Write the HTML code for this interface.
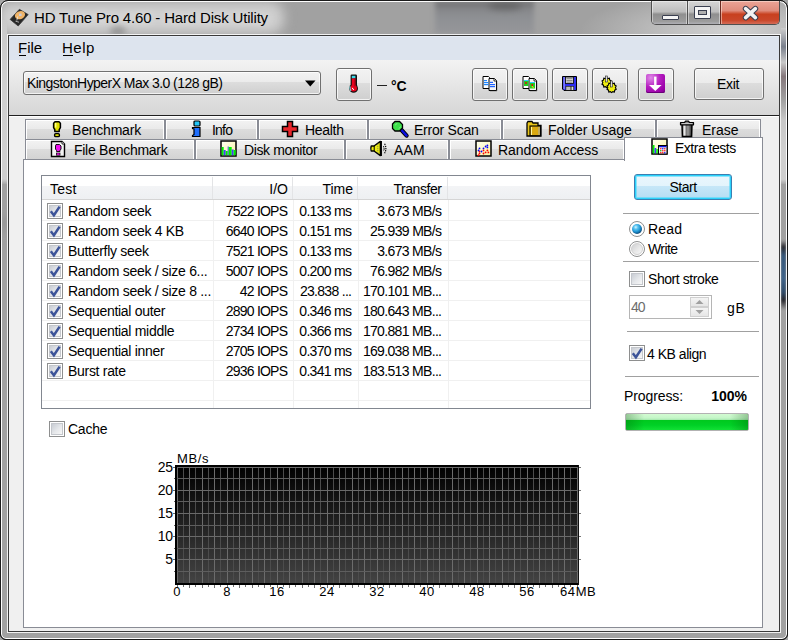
<!DOCTYPE html>
<html><head><meta charset="utf-8"><title>HD Tune Pro</title><style>
*{margin:0;padding:0;box-sizing:border-box}
html,body{width:788px;height:640px;overflow:hidden;background:#a1a1a1;font-family:'Liberation Sans', sans-serif}
.a{position:absolute}
.t{position:absolute;line-height:20px;white-space:nowrap;font-family:'Liberation Sans', sans-serif}
.btn{position:absolute;border:1px solid #707070;border-radius:3px;
 background:linear-gradient(#f2f2f2,#ebebeb 46%,#dddddd 46%,#cfcfcf);
 box-shadow:inset 0 0 0 1px rgba(255,255,255,.75)}
.tab{position:absolute;border:1px solid #898c95;
 background:linear-gradient(#f3f3f3,#eaeaea 46%,#dddddd 46%,#d3d3d3);
 box-shadow:inset 1px 1px 0 #fff, inset -1px 0 0 #fff}
.cb{position:absolute;width:16px;height:16px;border:1px solid #8e8f8f;background:#fff}
.cb::before{content:'';position:absolute;left:1px;top:1px;width:10px;height:10px;border:1px solid #c4c7cc;background:linear-gradient(135deg,#c9cdd4,#e6e8eb 55%,#f7f7f7)}
.sep{position:absolute;height:1px;background:#a0a0a0}
</style></head>
<body>
<div class="a" style="left:0;top:0;width:788px;height:640px;border-radius:8px 8px 6px 6px;border:1px solid #1a1a1a;background:#a1a1a1;box-shadow:inset 0 0 0 1px rgba(255,255,255,.85)"></div>
<div class="a" style="left:520px;top:1px;width:266px;height:34px;background:radial-gradient(ellipse 150px 40px at 210px 30px,rgba(212,212,212,.95),rgba(200,200,200,.6) 55%,rgba(163,163,163,0) 100%)"></div>
<div class="a" style="left:-2px;top:2px;width:286px;height:32px;border-radius:14px;background:rgba(210,210,210,.95);filter:blur(6px)"></div>
<div class="a" style="left:110px;top:26px;width:16px;height:10px;border-radius:50%;background:rgba(120,120,120,.6);filter:blur(3px)"></div>
<div class="a" style="left:435px;top:1px;width:99px;height:33px;background:linear-gradient(#6c6c6e,#86878a 25%,#8e9094 50%,#96979a);filter:blur(2.5px)"></div>
<div class="a" style="left:488px;top:2px;width:34px;height:8px;border-radius:50%;background:#555;filter:blur(3px);opacity:.6"></div>
<div class="a" style="left:2px;top:20px;width:5px;height:164px;background:linear-gradient(#cacaca,#d0d0d0 40%,#cfcfcf 97%,#a8a8a8)"></div>
<div class="a" style="left:2px;top:210px;width:5px;height:30px;background:linear-gradient(#a3a3a3,#959595 40%,#a3a3a3);filter:blur(2px)"></div>
<div class="a" style="left:781px;top:28px;width:5px;height:156px;background:linear-gradient(#cdcdcd,#7a808c 12%,#c8c8c8 22%,#85787c 31%,#a0a0a0 46%,#c8c8c8 59%,#d0d0d0 80%,#cfcfcf 97%,#a8a8a8);filter:blur(.6px)"></div>
<div class="a" style="left:781px;top:240px;width:5px;height:70px;background:linear-gradient(#a3a3a3,#2a2a30 10%,#35577a 22%,#3d6289 55%,#2e4a68 75%,#25252a 86%,#a3a3a3);filter:blur(.8px)"></div>
<div class="a" style="left:0;top:0;width:788px;height:640px;border-radius:8px 8px 6px 6px;border:1px solid #1a1a1a;box-shadow:inset 0 0 0 1px rgba(255,255,255,.85)"></div>
<svg class="a" style="left:6px;top:4px" width="24" height="26" viewBox="0 0 24 26">
<path d="M4.1 15.4 L13.4 5.3 L22.2 10.6 L12.2 22 Z" fill="#262626" stroke="#3a3a3a" stroke-width=".8" stroke-linejoin="round"/>
<ellipse cx="14" cy="11.2" rx="5.2" ry="4" transform="rotate(-20 14 11.2)" fill="#f0b468"/>
<rect x="13" y="9.6" width="2.6" height="2.4" fill="#c8ccd8"/>
<path d="M11.8 12.5 L10.8 16.5" stroke="#e8e8e8" stroke-width=".8"/>
<path d="M9.5 17.2 L13 18.2" stroke="#aaa" stroke-width="1"/>
</svg>
<div class="t" style="left:34px;top:8px;font-size:15px;color:#000;text-shadow:0 0 8px rgba(255,255,255,.7);letter-spacing:-0.17px;">HD Tune Pro 4.60 - Hard Disk Utility</div>
<div class="a" style="left:651px;top:1px;width:129px;height:24px;border:1px solid #505050;border-top:none;border-radius:0 0 5px 5px;overflow:hidden"><div class="a" style="left:0;top:0;width:35px;height:24px;background:linear-gradient(#d6d6d6,#bdbdbd 45%,#8f8f8f 55%,#9c9c9c 85%,#b8b8c0);box-shadow:inset 0 0 0 1px rgba(255,255,255,.45)"></div><div class="a" style="left:35px;top:0;width:1px;height:24px;background:#505050"></div><div class="a" style="left:36px;top:0;width:32px;height:24px;background:linear-gradient(#d6d6d6,#bdbdbd 45%,#8f8f8f 55%,#9c9c9c 85%,#b8b8c0);box-shadow:inset 0 0 0 1px rgba(255,255,255,.45)"></div><div class="a" style="left:68px;top:0;width:1px;height:24px;background:#6a2a20"></div><div class="a" style="left:69px;top:0;width:59px;height:24px;background:linear-gradient(#eaa497,#df8c7c 40%,#c8401f 55%,#c9472a 80%,#d87563);box-shadow:inset 0 0 0 1px rgba(255,240,230,.5)"></div></div>
<div class="a" style="left:662px;top:15px;width:17px;height:5px;border:1px solid #3a3f50;background:#f4f4f4;border-radius:1px"></div>
<div class="a" style="left:694px;top:6px;width:17px;height:13px;border:1px solid #3a3f50;background:#f4f4f4;border-radius:1px"></div>
<div class="a" style="left:698px;top:10px;width:9px;height:5px;border:1px solid #3a3f50;background:#b0b0b0"></div>
<svg class="a" style="left:741px;top:5px" width="19" height="16" viewBox="0 0 19 16">
<path d="M4.6 3.6 L14.4 12.6 M14.4 3.6 L4.6 12.6" stroke="#3a3f50" stroke-width="5.6" stroke-linecap="round"/>
<path d="M4.6 3.6 L14.4 12.6 M14.4 3.6 L4.6 12.6" stroke="#f2f2f2" stroke-width="3.6" stroke-linecap="round"/>
</svg>
<div class="a" style="left:7px;top:34px;width:774px;height:599px;border:1px solid rgba(255,255,255,.85)"></div>
<div class="a" style="left:8px;top:35px;width:772px;height:597px;border:1px solid #3a3a3a;background:#f0f0f0"></div>
<div class="a" style="left:9px;top:36px;width:770px;height:24px;background:#dde4ee;border-top:1px solid #e6ecf6"></div>
<div class="t" style="left:18px;top:38px;font-size:15px;color:#000;">File</div>
<div class="a" style="left:19px;top:55px;width:7px;height:1px;background:#000"></div>
<div class="t" style="left:62px;top:38px;font-size:15px;color:#000;letter-spacing:0.5px;">Help</div>
<div class="a" style="left:63px;top:55px;width:10px;height:1px;background:#000"></div>
<div class="a" style="left:9px;top:60px;width:770px;height:55px;background:linear-gradient(#f3f3f3,#d6d6d6)"></div>
<div class="a" style="left:9px;top:115px;width:770px;height:1px;background:#202020"></div>
<div class="a" style="left:9px;top:116px;width:770px;height:1px;background:#fff"></div>
<div class="btn" style="left:23px;top:71px;width:298px;height:24px"></div>
<div class="t" style="left:27px;top:73px;font-size:14px;color:#000;letter-spacing:-0.55px;">KingstonHyperX Max 3.0 (128 gB)</div>
<svg class="a" style="left:305px;top:80px" width="11" height="7"><path d="M0 0.5 H10.5 L5.25 6.5 Z" fill="#000"/></svg>
<div class="btn" style="left:336px;top:68px;width:36px;height:33px"></div>
<svg class="a" style="left:344px;top:72px" width="20" height="24" viewBox="0 0 20 24">
<rect x="6.6" y="2.6" width="6.4" height="13" rx="1.2" fill="#111"/>
<circle cx="9.6" cy="16.4" r="4.4" fill="#111"/>
<circle cx="9.6" cy="16.2" r="3.3" fill="#e5001a"/>
<rect x="7.8" y="3.8" width="3.6" height="2.6" fill="#3ad8e8"/>
<rect x="7.8" y="6.4" width="3.6" height="9" fill="#e8001c"/>
<rect x="10.4" y="6.4" width="1" height="8" fill="#a00010"/>
<path d="M6 14.5 Q5.6 17 7 18.8" stroke="#7fe8f0" stroke-width="1.1" fill="none"/>
<path d="M8.3 15.8 Q8.4 17.4 10 17.6" stroke="#fff" stroke-width="1" fill="none"/>
</svg>
<div class="a" style="left:377px;top:85px;width:10px;height:1px;background:#222"></div>
<div class="t" style="left:391px;top:76px;font-size:14px;color:#000;font-weight:bold;">°C</div>
<div class="btn" style="left:472px;top:68px;width:36px;height:33px"></div>
<div class="btn" style="left:512px;top:68px;width:36px;height:33px"></div>
<div class="btn" style="left:552px;top:68px;width:36px;height:33px"></div>
<div class="btn" style="left:592px;top:68px;width:36px;height:33px"></div>
<div class="btn" style="left:638px;top:68px;width:36px;height:33px"></div>
<svg class="a" style="left:482px;top:76px" width="18" height="18" viewBox="0 0 18 18">
<path d="M1 0.5 H6.5 L7.5 1.5 V12.5 H1 Z" fill="#fff" stroke="#000" stroke-width="1"/>
<path d="M7 2.5 H12.5 L14.5 4.5 V14.5 H7 Z" fill="#f4f4f4" stroke="#000" stroke-width="1"/>
<path d="M12 2.5 V5 H14.5" fill="#fff" stroke="#000" stroke-width=".8"/>
<path d="M14.9 5 V15 H8" stroke="#333" stroke-width=".8" fill="none" opacity=".5"/>
<rect x="2" y="4" width="3" height="1.2" fill="#1e86ff"/><rect x="2" y="6" width="4.5" height="1.2" fill="#1e86ff"/><rect x="2" y="8" width="4.5" height="1.2" fill="#1e86ff"/><rect x="8" y="5.8" width="3" height="1.2" fill="#1e62ff"/><rect x="8" y="8" width="5" height="1.2" fill="#1e62ff"/><rect x="8" y="10" width="5" height="1.2" fill="#1e62ff"/>
</svg>
<svg class="a" style="left:522px;top:76px" width="18" height="18" viewBox="0 0 18 18">
<path d="M1 0.5 H6.5 L7.5 1.5 V12.5 H1 Z" fill="#fff" stroke="#000" stroke-width="1"/>
<path d="M7 2.5 H12.5 L14.5 4.5 V14.5 H7 Z" fill="#f4f4f4" stroke="#000" stroke-width="1"/>
<path d="M12 2.5 V5 H14.5" fill="#fff" stroke="#000" stroke-width=".8"/>
<path d="M14.9 5 V15 H8" stroke="#333" stroke-width=".8" fill="none" opacity=".5"/>
<rect x="2" y="4" width="4.5" height="6" fill="#22cc22"/><rect x="2" y="4" width="4.5" height="1" fill="#2ad0ff"/><circle cx="4" cy="7" r=".9" fill="#e00"/><rect x="8" y="6" width="5" height="6.5" fill="#22cc22"/><rect x="8" y="6" width="5" height="1" fill="#2ad0ff"/><circle cx="10.2" cy="9" r=".9" fill="#e00"/><path d="M10 10 l1.5 2" stroke="#ee0" stroke-width="1"/>
</svg>
<svg class="a" style="left:562px;top:76px" width="16" height="16" viewBox="0 0 16 16">
<path d="M0.5 0.5 H14.5 V14.5 H2 L0.5 13 Z" fill="#2f2fef" stroke="#000" stroke-width="1"/>
<rect x="1.5" y="1" width="1.3" height="12" fill="#8a8af8"/>
<rect x="3.5" y="1" width="8" height="6.5" fill="#d8d8d8" stroke="#000" stroke-width=".8"/>
<rect x="4.5" y="2.3" width="6" height=".8" fill="#777"/><rect x="4.5" y="4" width="6" height=".8" fill="#777"/><rect x="4.5" y="5.7" width="6" height=".8" fill="#777"/>
<rect x="3.5" y="10" width="8.5" height="4.5" fill="#222"/>
<rect x="4.2" y="10.7" width="4.3" height="3.3" fill="#bbb"/><rect x="9.5" y="10.7" width="1.8" height="3.3" fill="#ddd"/>
</svg>
<svg class="a" style="left:600px;top:75px" width="18" height="19" viewBox="0 0 18 19">
<g stroke="#000" stroke-width="1.1" fill="#f0ef10">
<path d="M2 6 l1.5 -1 l0.3 -1.8 l1.6 0.4 l1.2 -1 l1.2 1 l1.6 -0.4 l0.3 1.8 l1.5 1 l-0.8 1.6 l0.8 1.6 l-1.5 1 l-0.3 1.8 l-1.6 -0.4 l-1.2 1 l-1.2 -1 l-1.6 0.4 l-0.3 -1.8 l-1.5 -1 l0.8 -1.6 Z"/>
<path d="M7 11 l1.5 -1 l0.3 -1.8 l1.6 0.4 l1.2 -1 l1.2 1 l1.6 -0.4 l0.3 1.8 l1.5 1 l-0.8 1.6 l0.8 1.6 l-1.5 1 l-0.3 1.8 l-1.6 -0.4 l-1.2 1 l-1.2 -1 l-1.6 0.4 l-0.3 -1.8 l-1.5 -1 l0.8 -1.6 Z"/>
</g>
<rect x="5.6" y="1" width="1.8" height="6" fill="#ddd" stroke="#222" stroke-width=".6"/>
<rect x="10.6" y="6" width="1.8" height="6" fill="#ddd" stroke="#222" stroke-width=".6"/>
</svg>
<div class="a" style="left:646px;top:74px;width:19px;height:19px;border-radius:2px;background:radial-gradient(circle at 25% 20%,#e08ae8,#b51ec0 45%,#9a00a8 80%,#7a0088);box-shadow:inset 0 -1px 0 #6a0078"></div>
<svg class="a" style="left:646px;top:74px" width="20" height="19" viewBox="0 0 20 19">
<rect x="8.1" y="2.6" width="2.4" height="9" fill="#fff"/>
<path d="M3 11 H15.6 L9.3 17 Z" fill="#fff"/>
</svg>
<div class="btn" style="left:694px;top:68px;width:70px;height:32px"></div>
<div class="t" style="left:717px;top:74px;font-size:14px;color:#000;letter-spacing:-0.33px;">Exit</div>
<div class="tab" style="left:25px;top:119px;width:140px;height:21px"></div>
<div class="tab" style="left:165px;top:119px;width:93px;height:21px"></div>
<div class="tab" style="left:258px;top:119px;width:110px;height:21px"></div>
<div class="tab" style="left:368px;top:119px;width:134px;height:21px"></div>
<div class="tab" style="left:502px;top:119px;width:154px;height:21px"></div>
<div class="tab" style="left:656px;top:119px;width:105px;height:21px"></div>
<div class="tab" style="left:25px;top:139px;width:170px;height:21px"></div>
<div class="tab" style="left:195px;top:139px;width:150px;height:21px"></div>
<div class="tab" style="left:345px;top:139px;width:104px;height:21px"></div>
<div class="tab" style="left:449px;top:139px;width:176px;height:21px"></div>
<div class="a" style="left:23px;top:159px;width:740px;height:469px;border:1px solid #898c95;background:#fff"></div>
<div class="a" style="left:624px;top:137px;width:139px;height:24px;border:1px solid #898c95;border-bottom:none;background:#fff"></div>
<div class="t" style="left:72px;top:120px;font-size:14px;color:#000;letter-spacing:-0.21px;">Benchmark</div>
<div class="t" style="left:212px;top:120px;font-size:14px;color:#000;letter-spacing:-0.8px;">Info</div>
<div class="t" style="left:305px;top:120px;font-size:14px;color:#000;letter-spacing:-0.3px;">Health</div>
<div class="t" style="left:414px;top:120px;font-size:14px;color:#000;letter-spacing:-0.24px;">Error Scan</div>
<div class="t" style="left:548px;top:120px;font-size:14px;color:#000;letter-spacing:-0.03px;">Folder Usage</div>
<div class="t" style="left:702px;top:120px;font-size:14px;color:#000;">Erase</div>
<div class="t" style="left:74px;top:140px;font-size:14px;color:#000;letter-spacing:-0.27px;">File Benchmark</div>
<div class="t" style="left:244px;top:140px;font-size:14px;color:#000;letter-spacing:-0.38px;">Disk monitor</div>
<div class="t" style="left:394px;top:140px;font-size:14px;color:#000;letter-spacing:0.1px;">AAM</div>
<div class="t" style="left:498px;top:140px;font-size:14px;color:#000;letter-spacing:-0.08px;">Random Access</div>
<div class="t" style="left:675px;top:138px;font-size:14px;color:#000;letter-spacing:-0.5px;">Extra tests</div>
<svg class="a" style="left:52px;top:120px" width="10" height="18" viewBox="0 0 10 18">
<path d="M3 1.8 H7 L8.4 3.2 V7.6 L7.2 9.6 V11.6 H2.8 V9.6 L1.6 7.6 V3.2 Z" fill="#e0e000" stroke="#000" stroke-width="1.5" stroke-linejoin="round"/>
<rect x="2.6" y="13.6" width="4.8" height="3" rx="1.2" fill="#d8d800" stroke="#000" stroke-width="1.4"/>
<rect x="3" y="3" width="1.4" height="4.5" fill="#ffff90"/>
</svg>
<svg class="a" style="left:50px;top:140px" width="17" height="18" viewBox="0 0 17 18">
<path d="M1.5 1.5 H12 L14.5 4 V16.5 H1.5 Z" fill="#f4f4f4" stroke="#000" stroke-width="1.4"/>
<path d="M12 1.5 V4 H14.5" fill="#fff" stroke="#000" stroke-width=".8"/>
<path d="M6 4.5 H9.5 L11 6 V9 L10 10.5 V11.5 H6.5 V10.5 L5.5 9 V6 Z" fill="#ee10ee" stroke="#000" stroke-width=".9"/>
<rect x="6.5" y="13" width="3.5" height="2.2" fill="#ee10ee" stroke="#000" stroke-width=".7"/>
</svg>
<svg class="a" style="left:191px;top:120px" width="11" height="18" viewBox="0 0 11 18">
<rect x="3" y="1" width="6" height="5" rx="1" fill="#22c4f4" stroke="#000" stroke-width="1.2"/>
<path d="M1.5 7.5 H9 V16.5 H1.5 V15.5 L3 14.5 V9 L1.5 8.5 Z" fill="#1f6fff" stroke="#000" stroke-width="1.2"/>
</svg>
<svg class="a" style="left:281px;top:120px" width="18" height="18" viewBox="0 0 18 18">
<path d="M6.5 1.5 H11.5 V6.5 H16.5 V11.5 H11.5 V16.5 H6.5 V11.5 H1.5 V6.5 H6.5 Z" fill="#e8262b" stroke="#000" stroke-width="1.5"/>
</svg>
<svg class="a" style="left:391px;top:120px" width="19" height="19" viewBox="0 0 19 19">
<path d="M10.5 10 L15.6 15.6" stroke="#000" stroke-width="4.2" stroke-linecap="round"/>
<path d="M10.5 10 L15.6 15.6" stroke="#0a10e0" stroke-width="2.4" stroke-linecap="round"/>
<path d="M4 1.5 H8.5 L11.5 4.5 V8 L8.5 11 H4 L1.5 8.5 V4 Z" fill="#3de04a" stroke="#000" stroke-width="1.3"/>
<path d="M4.5 4.8 L6.5 3.2 M7.8 8.5 L10 6.5" stroke="#e8ffe8" stroke-width=".7" stroke-dasharray=".8 .6"/>
</svg>
<svg class="a" style="left:525px;top:120px" width="17" height="18" viewBox="0 0 17 18">
<path d="M2 3 L3 1.5 H7 L8 3 H13 V5.5 H16 V16 H2 Z" fill="#e8c418" stroke="#000" stroke-width="1.3"/>
<rect x="5" y="6" width="10.5" height="9.7" fill="#d9a810" stroke="#000" stroke-width="1.1"/>
<rect x="6" y="7" width="1" height="8" fill="#fff6a0"/>
<rect x="13.5" y="7" width="1" height="8" fill="#aaa"/>
</svg>
<svg class="a" style="left:679px;top:120px" width="16" height="18" viewBox="0 0 16 18">
<defs><linearGradient id="tg" x1="0" x2="1"><stop offset="0" stop-color="#5a5a5a"/><stop offset=".25" stop-color="#e8e8e8"/><stop offset=".45" stop-color="#7a7a7a"/><stop offset=".6" stop-color="#9a9a9a"/><stop offset="1" stop-color="#2a2a2a"/></linearGradient></defs>
<path d="M3 4 L3.4 16.6 H12.6 L13 4 Z" fill="url(#tg)" stroke="#000" stroke-width="1.5"/>
<path d="M1.5 2.6 H5.5 L6.5 1.2 H9.5 L10.5 2.6 H14.5 V4.8 H1.5 Z" fill="#8a8a8a" stroke="#000" stroke-width="1.2" stroke-linejoin="round"/>
<rect x="2.5" y="3.2" width="11" height="0.9" fill="#d8d8d8"/>
</svg>
<svg class="a" style="left:220px;top:140px" width="17" height="17" viewBox="0 0 17 17">
<defs><linearGradient id="g220" x1="0" y1="0" x2="1" y2="1"><stop offset="0" stop-color="#fffff4"/><stop offset="1" stop-color="#fbf3a0"/></linearGradient></defs>
<rect x="1" y="1" width="15" height="15" fill="url(#g220)" stroke="#000" stroke-width="1.5"/>
<rect x="1.7" y="7" width="2" height="8.3" fill="#00f000"/><rect x="3.7" y="10" width="2" height="5.3" fill="#4040f8"/><rect x="5.7" y="11" width="2" height="4.3" fill="#00f000"/><rect x="7.7" y="6.5" width="1" height="8.8" fill="#4040f8"/><rect x="8.7" y="7" width="3" height="8.3" fill="#00f000"/><rect x="11.7" y="9.5" width="2" height="5.8" fill="#4040f8"/><rect x="13.7" y="10" width="2" height="5.3" fill="#00f000"/>
</svg>
<svg class="a" style="left:475px;top:140px" width="17" height="17" viewBox="0 0 17 17">
<defs><linearGradient id="g475" x1="0" y1="0" x2="1" y2="1"><stop offset="0" stop-color="#fffff4"/><stop offset="1" stop-color="#fbf3a0"/></linearGradient></defs>
<rect x="1" y="1" width="15" height="15" fill="url(#g475)" stroke="#000" stroke-width="1.5"/>
<circle cx="3.5" cy="15.2" r=".9" fill="#f00"/><circle cx="4.5" cy="13.5" r=".9" fill="#f00"/><circle cx="4.5" cy="11.5" r=".9" fill="#f00"/><circle cx="3.5" cy="10.4" r=".9" fill="#00f"/><circle cx="4.5" cy="8.4" r=".9" fill="#00f"/><circle cx="6.5" cy="11.5" r=".9" fill="#00f"/><circle cx="8.5" cy="8.4" r=".9" fill="#00f"/><circle cx="8.5" cy="10.4" r=".9" fill="#f00"/><circle cx="8.5" cy="13.5" r=".9" fill="#f00"/><circle cx="10.6" cy="6.5" r=".9" fill="#00f"/><circle cx="10.6" cy="12.4" r=".9" fill="#f00"/><circle cx="12.4" cy="5.4" r=".9" fill="#00f"/><circle cx="12.4" cy="7.4" r=".9" fill="#00f"/><circle cx="12.4" cy="10.4" r=".9" fill="#f00"/><circle cx="13.4" cy="12.4" r=".9" fill="#f00"/>
</svg>
<svg class="a" style="left:651px;top:138px" width="17" height="17" viewBox="0 0 17 17">
<defs><linearGradient id="g651" x1="0" y1="0" x2="1" y2="1"><stop offset="0" stop-color="#fffff4"/><stop offset="1" stop-color="#fbf3a0"/></linearGradient></defs>
<rect x="1" y="1" width="15" height="15" fill="url(#g651)" stroke="#000" stroke-width="1.5"/>
<rect x="1.7" y="7" width="1.8" height="8.3" fill="#00f000"/><rect x="3.5" y="10" width="1.8" height="5.3" fill="#4040f8"/><rect x="5.3" y="11" width="1.5" height="4.3" fill="#00f000"/><rect x="7.5" y="7.5" width="8.5" height="8.5" fill="#f4f4f4" stroke="#000" stroke-width="1"/><rect x="8" y="8" width="7.5" height="1.3" fill="#1010e0"/><circle cx="9.8" cy="10.8" r=".75" fill="#f00"/><circle cx="11.8" cy="10.8" r=".75" fill="#00f"/><circle cx="13.8" cy="10.8" r=".75" fill="#f00"/><circle cx="9.8" cy="12.8" r=".75" fill="#0a0"/><circle cx="11.8" cy="12.8" r=".75" fill="#f00"/><circle cx="13.8" cy="12.8" r=".75" fill="#f00"/><circle cx="9.8" cy="14.8" r=".75" fill="#f00"/><circle cx="11.8" cy="14.8" r=".75" fill="#f00"/><circle cx="13.8" cy="14.8" r=".75" fill="#00f"/>
</svg>
<svg class="a" style="left:368px;top:139px" width="20" height="20" viewBox="0 0 20 20">
<path d="M3.2 7 H6 L12.4 2.4 V16.6 L6 12 H3.2 Q2.4 9.5 3.2 7 Z" fill="#ecec10" stroke="#000" stroke-width="1.4" stroke-linejoin="round"/>
<path d="M13.1 2 V17" stroke="#000" stroke-width="1.7"/>
<path d="M6.2 7 V12" stroke="#000" stroke-width="1"/>
<path d="M9.8 4.8 V14.2" stroke="#666" stroke-width=".7" stroke-dasharray="1.2 .8"/>
<path d="M15.4 7.2 Q16.8 9.5 15.4 11.8" stroke="#000" stroke-width="1.2" fill="none" stroke-dasharray="1.3 .9"/>
<path d="M16.6 4.8 Q19.2 9.5 16.6 14.2" stroke="#000" stroke-width="1.2" fill="none" stroke-dasharray="1.3 .9"/>
</svg>
<div class="a" style="left:41px;top:175px;width:550px;height:234px;border:1px solid #828790;background:#fff"></div>
<div class="a" style="left:42px;top:176px;width:548px;height:23px;background:linear-gradient(#ffffff 45%,#f3f4f6 45%,#eef0f2)"></div>
<div class="a" style="left:42px;top:199px;width:548px;height:1px;background:#d5d5d5"></div>
<div class="a" style="left:212px;top:177px;width:1px;height:22px;background:#e3e4e6"></div>
<div class="a" style="left:213px;top:200px;width:1px;height:208px;background:#f0f0f0"></div>
<div class="a" style="left:292px;top:177px;width:1px;height:22px;background:#e3e4e6"></div>
<div class="a" style="left:293px;top:200px;width:1px;height:208px;background:#f0f0f0"></div>
<div class="a" style="left:357px;top:177px;width:1px;height:22px;background:#e3e4e6"></div>
<div class="a" style="left:358px;top:200px;width:1px;height:208px;background:#f0f0f0"></div>
<div class="a" style="left:447px;top:177px;width:1px;height:22px;background:#e3e4e6"></div>
<div class="a" style="left:448px;top:200px;width:1px;height:208px;background:#f0f0f0"></div>
<div class="a" style="left:42px;top:220px;width:548px;height:1px;background:#f0f0f0"></div>
<div class="a" style="left:42px;top:240px;width:548px;height:1px;background:#f0f0f0"></div>
<div class="a" style="left:42px;top:260px;width:548px;height:1px;background:#f0f0f0"></div>
<div class="a" style="left:42px;top:280px;width:548px;height:1px;background:#f0f0f0"></div>
<div class="a" style="left:42px;top:300px;width:548px;height:1px;background:#f0f0f0"></div>
<div class="a" style="left:42px;top:320px;width:548px;height:1px;background:#f0f0f0"></div>
<div class="a" style="left:42px;top:340px;width:548px;height:1px;background:#f0f0f0"></div>
<div class="a" style="left:42px;top:360px;width:548px;height:1px;background:#f0f0f0"></div>
<div class="a" style="left:42px;top:380px;width:548px;height:1px;background:#f0f0f0"></div>
<div class="a" style="left:42px;top:400px;width:548px;height:1px;background:#f0f0f0"></div>
<div class="t" style="left:50px;top:179px;font-size:14px;color:#000;letter-spacing:0.2px;">Test</div>
<div class="t" style="right:500px;top:179px;font-size:14px;color:#000;text-align:right;letter-spacing:0px;">I/O</div>
<div class="t" style="right:435px;top:179px;font-size:14px;color:#000;text-align:right;letter-spacing:0px;">Time</div>
<div class="t" style="right:346.43px;top:179px;font-size:14px;color:#000;text-align:right;letter-spacing:-0.43px;">Transfer</div>
<div class="cb" style="left:47px;top:203px"><svg class="a" style="left:1px;top:1px" width="13" height="13" viewBox="0 0 13 13"><path d="M1.8 6.3 L4.9 10.3 L10.6 1.6" stroke="#3d5499" stroke-width="2.5" fill="none"/></svg></div>
<div class="t" style="left:68px;top:201px;font-size:14px;color:#000;letter-spacing:-0.3px;">Random seek</div>
<div class="t" style="right:500.78px;top:201px;font-size:14px;color:#000;text-align:right;letter-spacing:-0.78px;">7522 IOPS</div>
<div class="t" style="right:436.7px;top:201px;font-size:14px;color:#000;text-align:right;letter-spacing:-0.7px;">0.133 ms</div>
<div class="t" style="right:346.67px;top:201px;font-size:14px;color:#000;text-align:right;letter-spacing:-0.67px;">3.673 MB/s</div>
<div class="cb" style="left:47px;top:223px"><svg class="a" style="left:1px;top:1px" width="13" height="13" viewBox="0 0 13 13"><path d="M1.8 6.3 L4.9 10.3 L10.6 1.6" stroke="#3d5499" stroke-width="2.5" fill="none"/></svg></div>
<div class="t" style="left:68px;top:221px;font-size:14px;color:#000;letter-spacing:-0.3px;">Random seek 4 KB</div>
<div class="t" style="right:500.78px;top:221px;font-size:14px;color:#000;text-align:right;letter-spacing:-0.78px;">6640 IOPS</div>
<div class="t" style="right:436.7px;top:221px;font-size:14px;color:#000;text-align:right;letter-spacing:-0.7px;">0.151 ms</div>
<div class="t" style="right:346.67px;top:221px;font-size:14px;color:#000;text-align:right;letter-spacing:-0.67px;">25.939 MB/s</div>
<div class="cb" style="left:47px;top:243px"><svg class="a" style="left:1px;top:1px" width="13" height="13" viewBox="0 0 13 13"><path d="M1.8 6.3 L4.9 10.3 L10.6 1.6" stroke="#3d5499" stroke-width="2.5" fill="none"/></svg></div>
<div class="t" style="left:68px;top:241px;font-size:14px;color:#000;letter-spacing:-0.3px;">Butterfly seek</div>
<div class="t" style="right:500.78px;top:241px;font-size:14px;color:#000;text-align:right;letter-spacing:-0.78px;">7521 IOPS</div>
<div class="t" style="right:436.7px;top:241px;font-size:14px;color:#000;text-align:right;letter-spacing:-0.7px;">0.133 ms</div>
<div class="t" style="right:346.67px;top:241px;font-size:14px;color:#000;text-align:right;letter-spacing:-0.67px;">3.673 MB/s</div>
<div class="cb" style="left:47px;top:263px"><svg class="a" style="left:1px;top:1px" width="13" height="13" viewBox="0 0 13 13"><path d="M1.8 6.3 L4.9 10.3 L10.6 1.6" stroke="#3d5499" stroke-width="2.5" fill="none"/></svg></div>
<div class="t" style="left:68px;top:261px;font-size:14px;color:#000;letter-spacing:-0.3px;">Random seek / size 6...</div>
<div class="t" style="right:500.78px;top:261px;font-size:14px;color:#000;text-align:right;letter-spacing:-0.78px;">5007 IOPS</div>
<div class="t" style="right:436.7px;top:261px;font-size:14px;color:#000;text-align:right;letter-spacing:-0.7px;">0.200 ms</div>
<div class="t" style="right:346.67px;top:261px;font-size:14px;color:#000;text-align:right;letter-spacing:-0.67px;">76.982 MB/s</div>
<div class="cb" style="left:47px;top:283px"><svg class="a" style="left:1px;top:1px" width="13" height="13" viewBox="0 0 13 13"><path d="M1.8 6.3 L4.9 10.3 L10.6 1.6" stroke="#3d5499" stroke-width="2.5" fill="none"/></svg></div>
<div class="t" style="left:68px;top:281px;font-size:14px;color:#000;letter-spacing:-0.3px;">Random seek / size 8 ...</div>
<div class="t" style="right:500.78px;top:281px;font-size:14px;color:#000;text-align:right;letter-spacing:-0.78px;">42 IOPS</div>
<div class="t" style="right:436.7px;top:281px;font-size:14px;color:#000;text-align:right;letter-spacing:-0.7px;">23.838 ...</div>
<div class="t" style="right:346.67px;top:281px;font-size:14px;color:#000;text-align:right;letter-spacing:-0.67px;">170.101 MB...</div>
<div class="cb" style="left:47px;top:303px"><svg class="a" style="left:1px;top:1px" width="13" height="13" viewBox="0 0 13 13"><path d="M1.8 6.3 L4.9 10.3 L10.6 1.6" stroke="#3d5499" stroke-width="2.5" fill="none"/></svg></div>
<div class="t" style="left:68px;top:301px;font-size:14px;color:#000;letter-spacing:-0.3px;">Sequential outer</div>
<div class="t" style="right:500.78px;top:301px;font-size:14px;color:#000;text-align:right;letter-spacing:-0.78px;">2890 IOPS</div>
<div class="t" style="right:436.7px;top:301px;font-size:14px;color:#000;text-align:right;letter-spacing:-0.7px;">0.346 ms</div>
<div class="t" style="right:346.67px;top:301px;font-size:14px;color:#000;text-align:right;letter-spacing:-0.67px;">180.643 MB...</div>
<div class="cb" style="left:47px;top:323px"><svg class="a" style="left:1px;top:1px" width="13" height="13" viewBox="0 0 13 13"><path d="M1.8 6.3 L4.9 10.3 L10.6 1.6" stroke="#3d5499" stroke-width="2.5" fill="none"/></svg></div>
<div class="t" style="left:68px;top:321px;font-size:14px;color:#000;letter-spacing:-0.3px;">Sequential middle</div>
<div class="t" style="right:500.78px;top:321px;font-size:14px;color:#000;text-align:right;letter-spacing:-0.78px;">2734 IOPS</div>
<div class="t" style="right:436.7px;top:321px;font-size:14px;color:#000;text-align:right;letter-spacing:-0.7px;">0.366 ms</div>
<div class="t" style="right:346.67px;top:321px;font-size:14px;color:#000;text-align:right;letter-spacing:-0.67px;">170.881 MB...</div>
<div class="cb" style="left:47px;top:343px"><svg class="a" style="left:1px;top:1px" width="13" height="13" viewBox="0 0 13 13"><path d="M1.8 6.3 L4.9 10.3 L10.6 1.6" stroke="#3d5499" stroke-width="2.5" fill="none"/></svg></div>
<div class="t" style="left:68px;top:341px;font-size:14px;color:#000;letter-spacing:-0.3px;">Sequential inner</div>
<div class="t" style="right:500.78px;top:341px;font-size:14px;color:#000;text-align:right;letter-spacing:-0.78px;">2705 IOPS</div>
<div class="t" style="right:436.7px;top:341px;font-size:14px;color:#000;text-align:right;letter-spacing:-0.7px;">0.370 ms</div>
<div class="t" style="right:346.67px;top:341px;font-size:14px;color:#000;text-align:right;letter-spacing:-0.67px;">169.038 MB...</div>
<div class="cb" style="left:47px;top:363px"><svg class="a" style="left:1px;top:1px" width="13" height="13" viewBox="0 0 13 13"><path d="M1.8 6.3 L4.9 10.3 L10.6 1.6" stroke="#3d5499" stroke-width="2.5" fill="none"/></svg></div>
<div class="t" style="left:68px;top:361px;font-size:14px;color:#000;letter-spacing:-0.3px;">Burst rate</div>
<div class="t" style="right:500.78px;top:361px;font-size:14px;color:#000;text-align:right;letter-spacing:-0.78px;">2936 IOPS</div>
<div class="t" style="right:436.7px;top:361px;font-size:14px;color:#000;text-align:right;letter-spacing:-0.7px;">0.341 ms</div>
<div class="t" style="right:346.67px;top:361px;font-size:14px;color:#000;text-align:right;letter-spacing:-0.67px;">183.513 MB...</div>
<div class="cb" style="left:49px;top:421px"></div>
<div class="t" style="left:68px;top:419px;font-size:14px;color:#000;letter-spacing:-0.25px;">Cache</div>
<div class="a" style="left:634px;top:174px;width:98px;height:26px;border:1px solid #3c7fb1;border-radius:3px;background:linear-gradient(#eaf6fd,#e3f4fc 46%,#c6e7f8 46%,#b4ddf3);box-shadow:inset 0 0 0 1px #2ad2fb,inset 0 0 0 2px rgba(70,215,250,.55)"></div>
<div class="t" style="left:583px;width:200px;text-align:center;top:177px;font-size:14px;color:#000;letter-spacing:-0.5px;">Start</div>
<div class="sep" style="left:623px;top:213px;width:136px"></div>
<div class="a" style="left:629px;top:221px;width:16px;height:16px;border-radius:50%;border:1px solid #8e8f8f;background:#fff"></div>
<div class="a" style="left:632px;top:224px;width:10px;height:10px;border-radius:50%;background:radial-gradient(circle at 38% 32%,#d8f6ff 0,#5cc4f0 22%,#2196d4 48%,#115d92 68%,#0b2f52 85%)"></div>
<div class="t" style="left:648px;top:219px;font-size:14px;color:#000;letter-spacing:0.2px;">Read</div>
<div class="a" style="left:629px;top:241px;width:16px;height:16px;border-radius:50%;border:1px solid #8e8f8f;background:#fff"></div>
<div class="a" style="left:631px;top:243px;width:12px;height:12px;border-radius:50%;border:1px solid #d0d0d0;background:linear-gradient(135deg,#cfd0d2,#e8e8e8 55%,#f8f8f8)"></div>
<div class="t" style="left:648px;top:239px;font-size:14px;color:#000;letter-spacing:-0.6px;">Write</div>
<div class="sep" style="left:623px;top:261px;width:136px"></div>
<div class="cb" style="left:629px;top:271px"></div>
<div class="t" style="left:648px;top:269px;font-size:14px;color:#000;letter-spacing:-0.43px;">Short stroke</div>
<div class="a" style="left:629px;top:295px;width:83px;height:24px;border:1px solid #b5b5b5;background:#fff"></div>
<div class="t" style="left:631px;top:297px;font-size:14px;color:#6d6d6d;letter-spacing:-1px;">40</div>
<div class="a" style="left:690px;top:297px;width:19px;height:10px;border:1px solid #d0d0d0;background:linear-gradient(#f4f4f4,#e6e6e6)"></div>
<div class="a" style="left:690px;top:307px;width:19px;height:10px;border:1px solid #d0d0d0;background:linear-gradient(#f4f4f4,#e6e6e6)"></div>
<svg class="a" style="left:695px;top:299px" width="9" height="16"><path d="M0.5 5 L4.5 1 L8.5 5 Z" fill="#a0a0a0"/><path d="M0.5 11 L4.5 15 L8.5 11 Z" fill="#a0a0a0"/></svg>
<div class="t" style="left:727px;top:298px;font-size:14px;color:#000;letter-spacing:0.8px;">gB</div>
<div class="sep" style="left:627px;top:331px;width:132px"></div>
<div class="cb" style="left:629px;top:345px"><svg class="a" style="left:1px;top:1px" width="13" height="13" viewBox="0 0 13 13"><path d="M1.8 6.3 L4.9 10.3 L10.6 1.6" stroke="#3d5499" stroke-width="2.5" fill="none"/></svg></div>
<div class="t" style="left:647px;top:344px;font-size:14px;color:#000;letter-spacing:-0.48px;">4 KB align</div>
<div class="sep" style="left:625px;top:376px;width:134px"></div>
<div class="t" style="left:624px;top:386px;font-size:14px;color:#000;letter-spacing:-0.1px;">Progress:</div>
<div class="t" style="right:41px;top:386px;font-size:14px;color:#000;text-align:right;font-weight:bold;letter-spacing:0px;">100%</div>
<div class="a" style="left:625px;top:413px;width:124px;height:18px;border:1px solid #b2b2b2;border-radius:2px;background:linear-gradient(#d2fbd2,#c4f6c8 25%,#a6e8ae 37%,#00c81e 37%,#00d126 70%,#12e035)"></div>
<div class="a" style="left:626px;top:414px;width:122px;height:16px;background:linear-gradient(90deg,rgba(0,70,0,.28),rgba(0,0,0,0) 15%,rgba(0,0,0,0) 85%,rgba(0,70,0,.28))"></div>
<svg class="a" style="left:0;top:440px" width="788" height="170" viewBox="0 440 788 170"><defs><linearGradient id="cg" x1="0" y1="0" x2="0" y2="1"><stop offset="0" stop-color="#000"/><stop offset="1" stop-color="#444"/></linearGradient></defs><rect x="175" y="465" width="404" height="120" fill="url(#cg)"/><line x1="177.5" y1="467" x2="177.5" y2="583" stroke="#6c6c6c" stroke-width="1"/><line x1="177.5" y1="585" x2="177.5" y2="588" stroke="#707070" stroke-width="1"/><line x1="183.5" y1="467" x2="183.5" y2="583" stroke="#4c4c4c" stroke-width="1"/><line x1="183.5" y1="585" x2="183.5" y2="587" stroke="#707070" stroke-width="1"/><line x1="189.5" y1="467" x2="189.5" y2="583" stroke="#6c6c6c" stroke-width="1"/><line x1="189.5" y1="585" x2="189.5" y2="588" stroke="#707070" stroke-width="1"/><line x1="195.5" y1="467" x2="195.5" y2="583" stroke="#4c4c4c" stroke-width="1"/><line x1="195.5" y1="585" x2="195.5" y2="587" stroke="#707070" stroke-width="1"/><line x1="202.5" y1="467" x2="202.5" y2="583" stroke="#6c6c6c" stroke-width="1"/><line x1="202.5" y1="585" x2="202.5" y2="588" stroke="#707070" stroke-width="1"/><line x1="208.5" y1="467" x2="208.5" y2="583" stroke="#4c4c4c" stroke-width="1"/><line x1="208.5" y1="585" x2="208.5" y2="587" stroke="#707070" stroke-width="1"/><line x1="214.5" y1="467" x2="214.5" y2="583" stroke="#6c6c6c" stroke-width="1"/><line x1="214.5" y1="585" x2="214.5" y2="588" stroke="#707070" stroke-width="1"/><line x1="220.5" y1="467" x2="220.5" y2="583" stroke="#4c4c4c" stroke-width="1"/><line x1="220.5" y1="585" x2="220.5" y2="587" stroke="#707070" stroke-width="1"/><line x1="227.5" y1="467" x2="227.5" y2="583" stroke="#6c6c6c" stroke-width="1"/><line x1="227.5" y1="585" x2="227.5" y2="588" stroke="#707070" stroke-width="1"/><line x1="233.5" y1="467" x2="233.5" y2="583" stroke="#4c4c4c" stroke-width="1"/><line x1="233.5" y1="585" x2="233.5" y2="587" stroke="#707070" stroke-width="1"/><line x1="239.5" y1="467" x2="239.5" y2="583" stroke="#6c6c6c" stroke-width="1"/><line x1="239.5" y1="585" x2="239.5" y2="588" stroke="#707070" stroke-width="1"/><line x1="245.5" y1="467" x2="245.5" y2="583" stroke="#4c4c4c" stroke-width="1"/><line x1="245.5" y1="585" x2="245.5" y2="587" stroke="#707070" stroke-width="1"/><line x1="252.5" y1="467" x2="252.5" y2="583" stroke="#6c6c6c" stroke-width="1"/><line x1="252.5" y1="585" x2="252.5" y2="588" stroke="#707070" stroke-width="1"/><line x1="258.5" y1="467" x2="258.5" y2="583" stroke="#4c4c4c" stroke-width="1"/><line x1="258.5" y1="585" x2="258.5" y2="587" stroke="#707070" stroke-width="1"/><line x1="264.5" y1="467" x2="264.5" y2="583" stroke="#6c6c6c" stroke-width="1"/><line x1="264.5" y1="585" x2="264.5" y2="588" stroke="#707070" stroke-width="1"/><line x1="270.5" y1="467" x2="270.5" y2="583" stroke="#4c4c4c" stroke-width="1"/><line x1="270.5" y1="585" x2="270.5" y2="587" stroke="#707070" stroke-width="1"/><line x1="277.5" y1="467" x2="277.5" y2="583" stroke="#6c6c6c" stroke-width="1"/><line x1="277.5" y1="585" x2="277.5" y2="588" stroke="#707070" stroke-width="1"/><line x1="283.5" y1="467" x2="283.5" y2="583" stroke="#4c4c4c" stroke-width="1"/><line x1="283.5" y1="585" x2="283.5" y2="587" stroke="#707070" stroke-width="1"/><line x1="289.5" y1="467" x2="289.5" y2="583" stroke="#6c6c6c" stroke-width="1"/><line x1="289.5" y1="585" x2="289.5" y2="588" stroke="#707070" stroke-width="1"/><line x1="295.5" y1="467" x2="295.5" y2="583" stroke="#4c4c4c" stroke-width="1"/><line x1="295.5" y1="585" x2="295.5" y2="587" stroke="#707070" stroke-width="1"/><line x1="302.5" y1="467" x2="302.5" y2="583" stroke="#6c6c6c" stroke-width="1"/><line x1="302.5" y1="585" x2="302.5" y2="588" stroke="#707070" stroke-width="1"/><line x1="308.5" y1="467" x2="308.5" y2="583" stroke="#4c4c4c" stroke-width="1"/><line x1="308.5" y1="585" x2="308.5" y2="587" stroke="#707070" stroke-width="1"/><line x1="314.5" y1="467" x2="314.5" y2="583" stroke="#6c6c6c" stroke-width="1"/><line x1="314.5" y1="585" x2="314.5" y2="588" stroke="#707070" stroke-width="1"/><line x1="320.5" y1="467" x2="320.5" y2="583" stroke="#4c4c4c" stroke-width="1"/><line x1="320.5" y1="585" x2="320.5" y2="587" stroke="#707070" stroke-width="1"/><line x1="327.5" y1="467" x2="327.5" y2="583" stroke="#6c6c6c" stroke-width="1"/><line x1="327.5" y1="585" x2="327.5" y2="588" stroke="#707070" stroke-width="1"/><line x1="333.5" y1="467" x2="333.5" y2="583" stroke="#4c4c4c" stroke-width="1"/><line x1="333.5" y1="585" x2="333.5" y2="587" stroke="#707070" stroke-width="1"/><line x1="339.5" y1="467" x2="339.5" y2="583" stroke="#6c6c6c" stroke-width="1"/><line x1="339.5" y1="585" x2="339.5" y2="588" stroke="#707070" stroke-width="1"/><line x1="345.5" y1="467" x2="345.5" y2="583" stroke="#4c4c4c" stroke-width="1"/><line x1="345.5" y1="585" x2="345.5" y2="587" stroke="#707070" stroke-width="1"/><line x1="352.5" y1="467" x2="352.5" y2="583" stroke="#6c6c6c" stroke-width="1"/><line x1="352.5" y1="585" x2="352.5" y2="588" stroke="#707070" stroke-width="1"/><line x1="358.5" y1="467" x2="358.5" y2="583" stroke="#4c4c4c" stroke-width="1"/><line x1="358.5" y1="585" x2="358.5" y2="587" stroke="#707070" stroke-width="1"/><line x1="364.5" y1="467" x2="364.5" y2="583" stroke="#6c6c6c" stroke-width="1"/><line x1="364.5" y1="585" x2="364.5" y2="588" stroke="#707070" stroke-width="1"/><line x1="370.5" y1="467" x2="370.5" y2="583" stroke="#4c4c4c" stroke-width="1"/><line x1="370.5" y1="585" x2="370.5" y2="587" stroke="#707070" stroke-width="1"/><line x1="377.5" y1="467" x2="377.5" y2="583" stroke="#6c6c6c" stroke-width="1"/><line x1="377.5" y1="585" x2="377.5" y2="588" stroke="#707070" stroke-width="1"/><line x1="383.5" y1="467" x2="383.5" y2="583" stroke="#4c4c4c" stroke-width="1"/><line x1="383.5" y1="585" x2="383.5" y2="587" stroke="#707070" stroke-width="1"/><line x1="389.5" y1="467" x2="389.5" y2="583" stroke="#6c6c6c" stroke-width="1"/><line x1="389.5" y1="585" x2="389.5" y2="588" stroke="#707070" stroke-width="1"/><line x1="395.5" y1="467" x2="395.5" y2="583" stroke="#4c4c4c" stroke-width="1"/><line x1="395.5" y1="585" x2="395.5" y2="587" stroke="#707070" stroke-width="1"/><line x1="402.5" y1="467" x2="402.5" y2="583" stroke="#6c6c6c" stroke-width="1"/><line x1="402.5" y1="585" x2="402.5" y2="588" stroke="#707070" stroke-width="1"/><line x1="408.5" y1="467" x2="408.5" y2="583" stroke="#4c4c4c" stroke-width="1"/><line x1="408.5" y1="585" x2="408.5" y2="587" stroke="#707070" stroke-width="1"/><line x1="414.5" y1="467" x2="414.5" y2="583" stroke="#6c6c6c" stroke-width="1"/><line x1="414.5" y1="585" x2="414.5" y2="588" stroke="#707070" stroke-width="1"/><line x1="420.5" y1="467" x2="420.5" y2="583" stroke="#4c4c4c" stroke-width="1"/><line x1="420.5" y1="585" x2="420.5" y2="587" stroke="#707070" stroke-width="1"/><line x1="427.5" y1="467" x2="427.5" y2="583" stroke="#6c6c6c" stroke-width="1"/><line x1="427.5" y1="585" x2="427.5" y2="588" stroke="#707070" stroke-width="1"/><line x1="433.5" y1="467" x2="433.5" y2="583" stroke="#4c4c4c" stroke-width="1"/><line x1="433.5" y1="585" x2="433.5" y2="587" stroke="#707070" stroke-width="1"/><line x1="439.5" y1="467" x2="439.5" y2="583" stroke="#6c6c6c" stroke-width="1"/><line x1="439.5" y1="585" x2="439.5" y2="588" stroke="#707070" stroke-width="1"/><line x1="445.5" y1="467" x2="445.5" y2="583" stroke="#4c4c4c" stroke-width="1"/><line x1="445.5" y1="585" x2="445.5" y2="587" stroke="#707070" stroke-width="1"/><line x1="452.5" y1="467" x2="452.5" y2="583" stroke="#6c6c6c" stroke-width="1"/><line x1="452.5" y1="585" x2="452.5" y2="588" stroke="#707070" stroke-width="1"/><line x1="458.5" y1="467" x2="458.5" y2="583" stroke="#4c4c4c" stroke-width="1"/><line x1="458.5" y1="585" x2="458.5" y2="587" stroke="#707070" stroke-width="1"/><line x1="464.5" y1="467" x2="464.5" y2="583" stroke="#6c6c6c" stroke-width="1"/><line x1="464.5" y1="585" x2="464.5" y2="588" stroke="#707070" stroke-width="1"/><line x1="470.5" y1="467" x2="470.5" y2="583" stroke="#4c4c4c" stroke-width="1"/><line x1="470.5" y1="585" x2="470.5" y2="587" stroke="#707070" stroke-width="1"/><line x1="477.5" y1="467" x2="477.5" y2="583" stroke="#6c6c6c" stroke-width="1"/><line x1="477.5" y1="585" x2="477.5" y2="588" stroke="#707070" stroke-width="1"/><line x1="483.5" y1="467" x2="483.5" y2="583" stroke="#4c4c4c" stroke-width="1"/><line x1="483.5" y1="585" x2="483.5" y2="587" stroke="#707070" stroke-width="1"/><line x1="489.5" y1="467" x2="489.5" y2="583" stroke="#6c6c6c" stroke-width="1"/><line x1="489.5" y1="585" x2="489.5" y2="588" stroke="#707070" stroke-width="1"/><line x1="495.5" y1="467" x2="495.5" y2="583" stroke="#4c4c4c" stroke-width="1"/><line x1="495.5" y1="585" x2="495.5" y2="587" stroke="#707070" stroke-width="1"/><line x1="502.5" y1="467" x2="502.5" y2="583" stroke="#6c6c6c" stroke-width="1"/><line x1="502.5" y1="585" x2="502.5" y2="588" stroke="#707070" stroke-width="1"/><line x1="508.5" y1="467" x2="508.5" y2="583" stroke="#4c4c4c" stroke-width="1"/><line x1="508.5" y1="585" x2="508.5" y2="587" stroke="#707070" stroke-width="1"/><line x1="514.5" y1="467" x2="514.5" y2="583" stroke="#6c6c6c" stroke-width="1"/><line x1="514.5" y1="585" x2="514.5" y2="588" stroke="#707070" stroke-width="1"/><line x1="520.5" y1="467" x2="520.5" y2="583" stroke="#4c4c4c" stroke-width="1"/><line x1="520.5" y1="585" x2="520.5" y2="587" stroke="#707070" stroke-width="1"/><line x1="527.5" y1="467" x2="527.5" y2="583" stroke="#6c6c6c" stroke-width="1"/><line x1="527.5" y1="585" x2="527.5" y2="588" stroke="#707070" stroke-width="1"/><line x1="533.5" y1="467" x2="533.5" y2="583" stroke="#4c4c4c" stroke-width="1"/><line x1="533.5" y1="585" x2="533.5" y2="587" stroke="#707070" stroke-width="1"/><line x1="539.5" y1="467" x2="539.5" y2="583" stroke="#6c6c6c" stroke-width="1"/><line x1="539.5" y1="585" x2="539.5" y2="588" stroke="#707070" stroke-width="1"/><line x1="545.5" y1="467" x2="545.5" y2="583" stroke="#4c4c4c" stroke-width="1"/><line x1="545.5" y1="585" x2="545.5" y2="587" stroke="#707070" stroke-width="1"/><line x1="552.5" y1="467" x2="552.5" y2="583" stroke="#6c6c6c" stroke-width="1"/><line x1="552.5" y1="585" x2="552.5" y2="588" stroke="#707070" stroke-width="1"/><line x1="558.5" y1="467" x2="558.5" y2="583" stroke="#4c4c4c" stroke-width="1"/><line x1="558.5" y1="585" x2="558.5" y2="587" stroke="#707070" stroke-width="1"/><line x1="564.5" y1="467" x2="564.5" y2="583" stroke="#6c6c6c" stroke-width="1"/><line x1="564.5" y1="585" x2="564.5" y2="588" stroke="#707070" stroke-width="1"/><line x1="570.5" y1="467" x2="570.5" y2="583" stroke="#4c4c4c" stroke-width="1"/><line x1="570.5" y1="585" x2="570.5" y2="587" stroke="#707070" stroke-width="1"/><line x1="577.5" y1="467" x2="577.5" y2="583" stroke="#6c6c6c" stroke-width="1"/><line x1="577.5" y1="585" x2="577.5" y2="588" stroke="#707070" stroke-width="1"/><line x1="177" y1="467.5" x2="579" y2="467.5" stroke="#6a6a6a" stroke-width="1"/><line x1="173" y1="467.5" x2="175" y2="467.5" stroke="#666" stroke-width="1"/><line x1="579" y1="467.5" x2="581" y2="467.5" stroke="#777" stroke-width="1"/><line x1="177" y1="478.5" x2="579" y2="478.5" stroke="#5e5e5e" stroke-width="1"/><line x1="174" y1="478.5" x2="175" y2="478.5" stroke="#666" stroke-width="1"/><line x1="177" y1="490.5" x2="579" y2="490.5" stroke="#6a6a6a" stroke-width="1"/><line x1="173" y1="490.5" x2="175" y2="490.5" stroke="#666" stroke-width="1"/><line x1="579" y1="490.5" x2="581" y2="490.5" stroke="#777" stroke-width="1"/><line x1="177" y1="501.5" x2="579" y2="501.5" stroke="#5e5e5e" stroke-width="1"/><line x1="174" y1="501.5" x2="175" y2="501.5" stroke="#666" stroke-width="1"/><line x1="177" y1="513.5" x2="579" y2="513.5" stroke="#6a6a6a" stroke-width="1"/><line x1="173" y1="513.5" x2="175" y2="513.5" stroke="#666" stroke-width="1"/><line x1="579" y1="513.5" x2="581" y2="513.5" stroke="#777" stroke-width="1"/><line x1="177" y1="525.5" x2="579" y2="525.5" stroke="#5e5e5e" stroke-width="1"/><line x1="174" y1="525.5" x2="175" y2="525.5" stroke="#666" stroke-width="1"/><line x1="177" y1="536.5" x2="579" y2="536.5" stroke="#6a6a6a" stroke-width="1"/><line x1="173" y1="536.5" x2="175" y2="536.5" stroke="#666" stroke-width="1"/><line x1="579" y1="536.5" x2="581" y2="536.5" stroke="#777" stroke-width="1"/><line x1="177" y1="548.5" x2="579" y2="548.5" stroke="#5e5e5e" stroke-width="1"/><line x1="174" y1="548.5" x2="175" y2="548.5" stroke="#666" stroke-width="1"/><line x1="177" y1="559.5" x2="579" y2="559.5" stroke="#6a6a6a" stroke-width="1"/><line x1="173" y1="559.5" x2="175" y2="559.5" stroke="#666" stroke-width="1"/><line x1="579" y1="559.5" x2="581" y2="559.5" stroke="#777" stroke-width="1"/><line x1="177" y1="571.5" x2="579" y2="571.5" stroke="#5e5e5e" stroke-width="1"/><line x1="174" y1="571.5" x2="175" y2="571.5" stroke="#666" stroke-width="1"/><rect x="175" y="465" width="2" height="120" fill="#000"/><rect x="175" y="465" width="404" height="2" fill="#000"/><rect x="175" y="583" width="404" height="2" fill="#000"/><rect x="578" y="465" width="1" height="120" fill="#111"/></svg>
<div class="t" style="right:615.3px;top:457px;font-size:14px;color:#000;text-align:right;letter-spacing:-0.3px;">25</div>
<div class="t" style="right:615.3px;top:480px;font-size:14px;color:#000;text-align:right;letter-spacing:-0.3px;">20</div>
<div class="t" style="right:615.3px;top:503px;font-size:14px;color:#000;text-align:right;letter-spacing:-0.3px;">15</div>
<div class="t" style="right:615.3px;top:526px;font-size:14px;color:#000;text-align:right;letter-spacing:-0.3px;">10</div>
<div class="t" style="right:615.3px;top:549px;font-size:14px;color:#000;text-align:right;letter-spacing:-0.3px;">5</div>
<div class="t" style="left:177px;top:449px;font-size:13px;color:#000;letter-spacing:0.6px;">MB/s</div>
<div class="t" style="left:77px;width:200px;text-align:center;top:582px;font-size:13px;color:#000;letter-spacing:0.4px;">0</div>
<div class="t" style="left:127px;width:200px;text-align:center;top:582px;font-size:13px;color:#000;letter-spacing:0.4px;">8</div>
<div class="t" style="left:177px;width:200px;text-align:center;top:582px;font-size:13px;color:#000;letter-spacing:0.4px;">16</div>
<div class="t" style="left:227px;width:200px;text-align:center;top:582px;font-size:13px;color:#000;letter-spacing:0.4px;">24</div>
<div class="t" style="left:277px;width:200px;text-align:center;top:582px;font-size:13px;color:#000;letter-spacing:0.4px;">32</div>
<div class="t" style="left:327px;width:200px;text-align:center;top:582px;font-size:13px;color:#000;letter-spacing:0.4px;">40</div>
<div class="t" style="left:377px;width:200px;text-align:center;top:582px;font-size:13px;color:#000;letter-spacing:0.4px;">48</div>
<div class="t" style="left:427px;width:200px;text-align:center;top:582px;font-size:13px;color:#000;letter-spacing:0.4px;">56</div>
<div class="t" style="left:560px;top:582px;font-size:13px;color:#000;letter-spacing:0.6px;">64MB</div>
</body></html>
